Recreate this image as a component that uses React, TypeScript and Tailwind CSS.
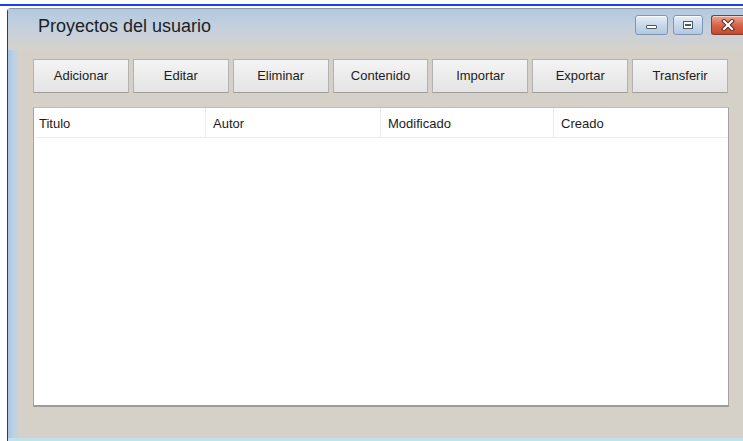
import React from "react";

const actions = ["Adicionar", "Editar", "Eliminar", "Contenido", "Importar", "Exportar", "Transferir"];
const columns = [
  { label: "Titulo", w: "w-[171px]", pad: "pl-[5px]" },
  { label: "Autor", w: "w-[175px]", pad: "pl-[7px]" },
  { label: "Modificado", w: "w-[173px]", pad: "pl-[7px]" },
  { label: "Creado", w: "flex-1", pad: "pl-[7px]" },
];

function MinimizeButton() {
  return (
    <div className="w-[33px] h-[20px] rounded-[3px] border border-[#7f97b4] bg-gradient-to-b from-[#e6eef7] via-[#c9d9ea] to-[#b3c8e0] flex items-end justify-center pb-[5px] shadow-[inset_0_1px_0_rgba(255,255,255,0.8)]">
      <div className="w-[11px] h-[4px] bg-white border border-[#4a5868] rounded-[1px]" />
    </div>
  );
}

function RestoreButton() {
  return (
    <div className="w-[30px] h-[20px] rounded-[3px] border border-[#7f97b4] bg-gradient-to-b from-[#e6eef7] via-[#c9d9ea] to-[#b3c8e0] flex items-center justify-center shadow-[inset_0_1px_0_rgba(255,255,255,0.8)]">
      <div className="w-[10px] h-[8px] bg-white border border-[#4a5868] flex items-center justify-center">
        <div className="w-[6px] h-[2px] bg-[#4a5868]" />
      </div>
    </div>
  );
}

function CloseButton() {
  return (
    <div className="w-[32px] h-[20px] rounded-l-[3px] border border-r-0 border-[#8a3a2a] bg-gradient-to-b from-[#eba793] via-[#d6654a] to-[#c54a2e] flex items-center justify-center shadow-[inset_0_1px_0_rgba(255,255,255,0.5)]">
      <svg width="14" height="12" viewBox="0 0 14 12">
        <path d="M3 2 L11 10 M11 2 L3 10" stroke="#5a2418" strokeWidth="4" strokeLinecap="square" />
        <path d="M3 2 L11 10 M11 2 L3 10" stroke="#ffffff" strokeWidth="2.2" strokeLinecap="square" />
      </svg>
    </div>
  );
}

export default function App() {
  return (
    <div className="w-[743px] h-[441px] bg-white flex flex-col overflow-hidden font-['Liberation_Sans',Arial,sans-serif]">
      <div className="h-[4px] shrink-0" />
      <div className="h-[2px] shrink-0 bg-[#1c3ee6]" />
      <div className="h-[2px] shrink-0" />

      {/* window */}
      <div className="flex-1 ml-[7px] flex flex-col border-l border-t border-l-[#3c3c3c] border-t-[#8a97a4] rounded-tl-[4px] bg-[#d5d1c9] min-h-0">
        {/* title bar */}
        <div className="h-[41px] shrink-0 flex items-start bg-gradient-to-b from-[#b3c9e1] via-[#c6d1dc] to-[#d6d2cb]">
          <div className="pl-[30px] pt-[6px] text-[18px] leading-[22px] text-[#1b1f26]">Proyectos del usuario</div>
          <div className="ml-auto flex items-start pt-[6px]">
            <MinimizeButton />
            <div className="w-[5px]" />
            <RestoreButton />
            <div className="w-[8px]" />
            <CloseButton />
          </div>
        </div>

        {/* body */}
        <div className="flex-1 flex min-h-0">
          <div className="w-[12px] shrink-0 bg-gradient-to-r from-[#a8c6e6] via-[#bdd1e4] to-[#d4d2cc]" />
          <div className="flex flex-col pl-[13px] pt-[9px]">
            <div className="w-[695px] flex gap-[4px]">
              {actions.map((a) => (
                <div
                  key={a}
                  className="flex-1 h-[34px] border border-[#b2b2b0] border-b-[#9e9e9c] bg-gradient-to-b from-[#f4f4f4] to-[#e4e4e4] flex items-center justify-center text-[13px] text-[#1c1c1c]"
                >
                  {a}
                </div>
              ))}
            </div>

            <div className="mt-[14px] w-[696px] h-[300px] bg-white border border-[#a3a3a1] border-t-[#bdbdbb] border-b-2 border-b-[#9c9c9a] flex flex-col">
              <div className="h-[30px] flex border-b border-[#ececec]">
                {columns.map((c, i) => (
                  <div
                    key={c.label}
                    className={`${c.w} ${c.pad} ${i > 0 ? "border-l border-[#ececec]" : ""} flex items-center pt-[3px] text-[13px] text-[#1c1c1c]`}
                  >
                    {c.label}
                  </div>
                ))}
              </div>
              <div className="flex-1" />
            </div>
          </div>
        </div>

        <div className="h-[3px] shrink-0 bg-[#bfe3ec]" />
      </div>
    </div>
  );
}
